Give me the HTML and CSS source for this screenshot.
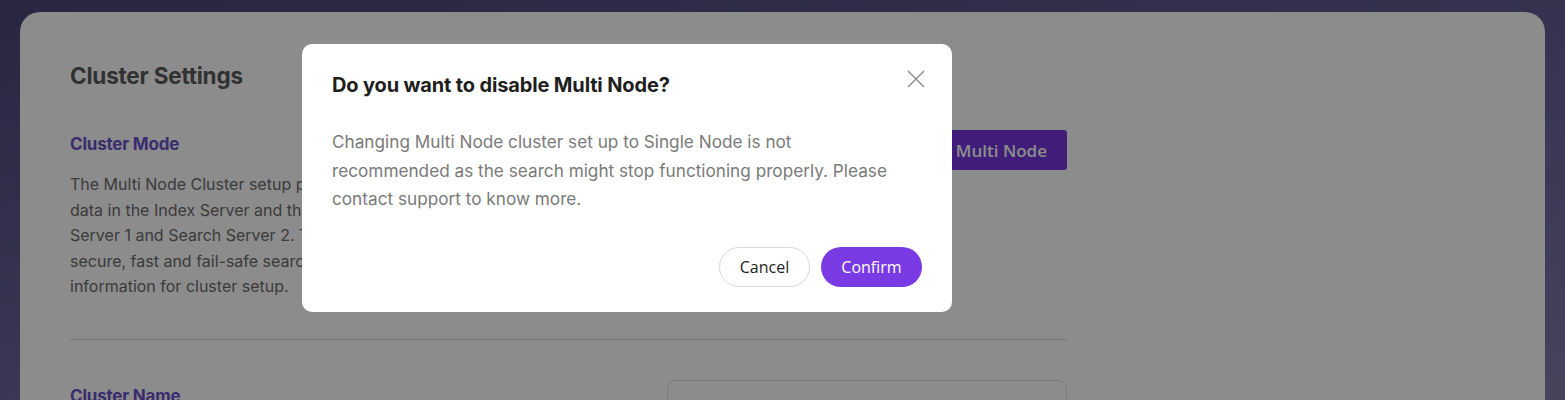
FILE: index.html
```html
<!DOCTYPE html>
<html lang="en">
<head>
<meta charset="utf-8">
<title>Cluster Settings</title>
<link rel="stylesheet" href="styles.css">
</head>
<body>
<div class="page">
  <main class="card">
    <h1 class="card-title">Cluster Settings</h1>
    <section class="row">
      <div class="row-text">
        <h2 class="row-label">Cluster Mode</h2>
        <p class="row-desc">The Multi Node Cluster setup provides the capability to store your<br>data in the Index Server and the queries are served from Search<br>Server 1 and Search Server 2. This setup gives you a more<br>secure, fast and fail-safe search. Contact support for more<br>information for cluster setup.</p>
      </div>
      <div class="toggle">
        <button class="toggle-btn">Single Node</button>
        <button class="toggle-btn active">Multi Node</button>
      </div>
    </section>
    <hr class="divider">
    <section class="row row-name">
      <div class="row-text">
        <h2 class="row-label label-name">Cluster Name</h2>
      </div>
      <div class="input-box"></div>
    </section>
  </main>
</div>
<div class="overlay"></div>
<div class="modal" role="dialog">
  <div class="modal-head">
    <h3 class="modal-title">Do you want to disable Multi Node?</h3>
    <button class="modal-close" aria-label="Close">
      <svg width="18" height="18" viewBox="0 0 18 18"><path d="M1 1 L17 17 M17 1 L1 17" stroke="#8a8a8a" stroke-width="1.4" fill="none"/></svg>
    </button>
  </div>
  <p class="modal-body">Changing Multi Node cluster set up to Single Node is not recommended as the search might stop functioning properly. Please contact support to know more.</p>
  <div class="modal-actions">
    <button class="btn btn-cancel">Cancel</button>
    <button class="btn btn-confirm">Confirm</button>
  </div>
</div>
</body>
</html>
```
FILE: styles.css
```css
* { box-sizing: border-box; }
html, body { margin: 0; height: 100%; }
body {
  font-family: Inter, "Noto Sans", sans-serif;
  background: linear-gradient(170deg, #4c4578 0%, #6c659a 60%, #837ba8 100%);
  overflow: hidden;
}
.page {
  padding: 12px 20px 0 20px;
}
.card {
  background: #fff;
  border-radius: 20px;
  padding: 50px 50px 0 50px;
  height: 500px;
}
.card-title {
  margin: 0 0 45px 0;
  font-size: 22.5px;
  font-weight: 700;
  color: #5a5a5a;
  letter-spacing: -0.2px;
}
.row {
  display: flex;
  justify-content: space-between;
  width: 997px;
}
.row-label {
  margin: 0;
  font-size: 17px;
  font-weight: 700;
  color: #6a52c8;
  letter-spacing: -0.2px;
}
.row-desc {
  margin: 18px 0 0 0;
  font-size: 16px;
  line-height: 25.5px;
  color: #6c6c6c;
}
.toggle {
  display: flex;
  align-self: flex-start;
  height: 40px;
  margin-top: -4px;
}
.toggle-btn {
  border: 0;
  background: #f0f0f0;
  font-family: "Open Sans", sans-serif;
  font-size: 17px;
  font-weight: 600;
  padding: 0 20px;
  color: #666;
}
.toggle-btn.active {
  background: #7436dd;
  color: #fff;
  border-radius: 0 3px 3px 0;
}
.divider {
  width: 997px;
  margin: 39px 0 40px 0;
  border: 0;
  border-top: 1px solid #d8d8d8;
}
.row-name { align-items: flex-start; }
.label-name { padding-top: 6px; }
.input-box {
  width: 400px;
  height: 44px;
  border: 1px solid #dcdcdc;
  border-radius: 8px;
}
.overlay {
  position: fixed;
  inset: 0;
  background: rgba(0, 0, 0, 0.45);
}
.modal {
  position: fixed;
  left: 302px;
  top: 44px;
  width: 650px;
  height: 268px;
  background: #fff;
  border-radius: 10px;
  padding: 28px 30px 25px 30px;
  display: flex;
  flex-direction: column;
}
.modal-head {
  display: flex;
  justify-content: space-between;
  align-items: flex-start;
}
.modal-title {
  margin: 0;
  font-size: 20px;
  font-weight: 700;
  color: #1e1e1e;
  letter-spacing: -0.15px;
  line-height: 26px;
}
.modal-close {
  border: 0;
  background: none;
  padding: 0;
  margin: -2px -3px 0 0;
  width: 18px;
  height: 18px;
  display: flex;
}
.modal-body {
  margin: 30px 0 0 0;
  max-width: 572px;
  font-size: 17.2px;
  line-height: 28.5px;
  color: #7a7a7a;
}
.modal-actions {
  margin-top: auto;
  display: flex;
  justify-content: flex-end;
  gap: 11px;
}
.btn {
  height: 40px;
  border-radius: 20px;
  font-family: "Open Sans", sans-serif;
  font-size: 16px;
  padding: 0 18px;
}
.btn-cancel {
  background: #fff;
  border: 1px solid #d9d9d9;
  color: #1e1e1e;
  width: 91px;
}
.btn-confirm {
  background: #7a3ae3;
  border: 0;
  color: #fff;
  width: 101px;
}
```
